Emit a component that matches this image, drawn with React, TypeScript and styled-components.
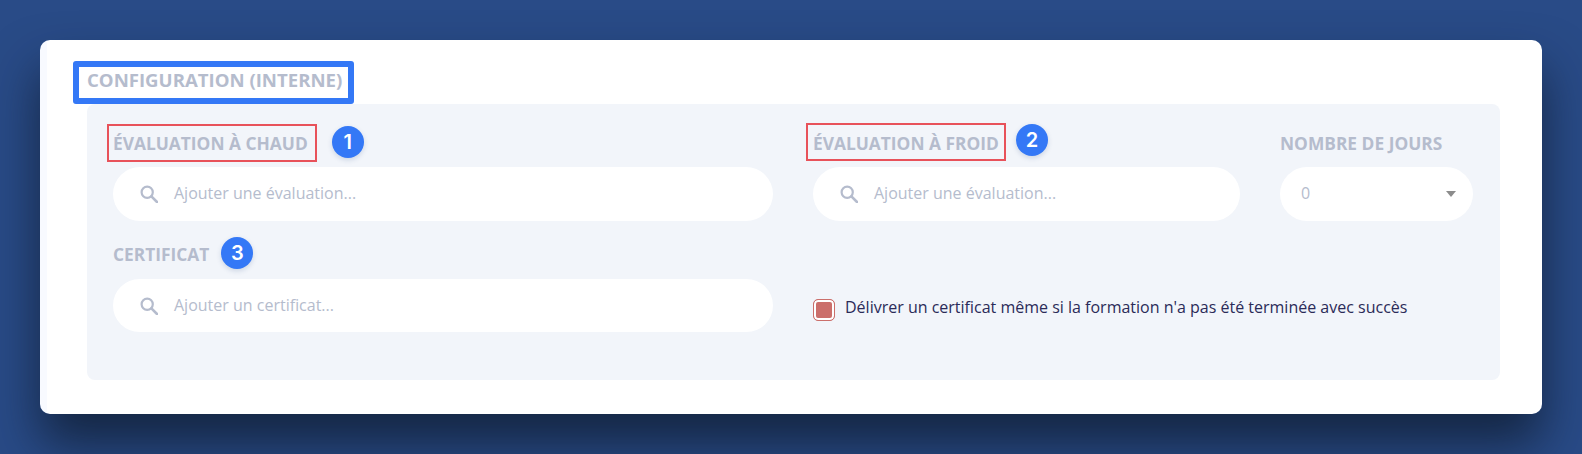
import styled, { createGlobalStyle } from 'styled-components'

const GlobalStyle = createGlobalStyle`
  html, body {
    margin: 0;
    padding: 0;
    background: #294b87;
    font-family: "Open Sans", "Liberation Sans", sans-serif;
  }
`

const Page = styled.div`
  box-sizing: border-box;
  width: 1582px;
  height: 454px;
  padding: 40px;
  overflow: hidden;
  background: #294b87;
`

const Card = styled.section`
  box-sizing: border-box;
  width: 1502px;
  height: 374px;
  padding: 0 42px 34px 47px;
  background: linear-gradient(90deg, #f8faff 0, #f8faff 7px, #fff 7px);
  border-radius: 10px;
  box-shadow: 0 30px 50px rgba(12, 24, 40, 0.72);
`

const TitleRow = styled.div`
  box-sizing: border-box;
  height: 64px;
  padding-top: 16px;
  display: flex;
  align-items: center;
`

const Title = styled.h2`
  position: relative;
  margin: 0;
  font-size: 18.6px;
  line-height: 24px;
  font-weight: 700;
  color: #b5bccd;
  white-space: nowrap;
  &::after {
    content: '';
    position: absolute;
    left: -14px;
    right: -12px;
    top: -7px;
    bottom: -12px;
    border: 6px solid #3478f6;
    border-radius: 3px;
  }
`

const Panel = styled.div`
  box-sizing: border-box;
  height: 276px;
  padding: 20px 27px 0 26px;
  background: #f2f5fa;
  border-radius: 8px;
  display: grid;
  grid-template-columns: 660px 427px 193px;
  grid-template-rows: auto auto;
  column-gap: 40px;
  row-gap: 14px;
  align-content: start;
`

const Field = styled.div`
  display: flex;
  flex-direction: column;
`

const LabelRow = styled.div<{ $below?: number }>`
  height: 38px;
  margin-bottom: ${(p) => p.$below ?? 5}px;
  display: flex;
  align-items: center;
`

const Label = styled.label`
  position: relative;
  font-size: 17.35px;
  line-height: 22px;
  font-weight: 700;
  color: #b5bccd;
  white-space: nowrap;
`

const RedBox = styled.span<{ $top: number; $left: number; $right: number }>`
  position: absolute;
  left: ${(p) => p.$left}px;
  right: ${(p) => p.$right}px;
  top: ${(p) => p.$top}px;
  height: 38px;
  box-sizing: border-box;
  border: 2px solid #e8525a;
`

const Badge = styled.span<{ $gap: number; $shift: number }>`
  position: absolute;
  left: calc(100% + ${(p) => p.$gap}px);
  top: calc(50% - 16px + ${(p) => p.$shift}px);
  width: 32px;
  height: 32px;
  border-radius: 50%;
  background: #3478f6;
  box-shadow: 0 2px 5px rgba(40, 70, 130, 0.18);
  color: #fff;
  font-family: Inter, "Liberation Sans", sans-serif;
  font-size: 20px;
  font-weight: 600;
  line-height: 32px;
  text-align: center;
`

const SearchBox = styled.div<{ $height?: number }>`
  box-sizing: border-box;
  height: ${(p) => p.$height ?? 54}px;
  padding: 0 27px 2px;
  display: flex;
  align-items: center;
  gap: 16px;
  background: #fff;
  border-radius: 27px;
  color: #b5bccd;
  font-size: 16px;
`

const SearchIcon = styled.svg`
  width: 18px;
  height: 18px;
  flex: none;
  position: relative;
  top: 1px;
`

const SelectBox = styled.div`
  box-sizing: border-box;
  height: 54px;
  padding: 0 17px 2px 21px;
  display: flex;
  align-items: center;
  justify-content: space-between;
  background: #fff;
  border-radius: 27px;
  color: #b5bccd;
  font-size: 16px;
`

const Caret = styled.span`
  width: 0;
  height: 0;
  margin-top: 2px;
  border-left: 5px solid transparent;
  border-right: 5px solid transparent;
  border-top: 6px solid #8c8c8c;
`

const CheckRow = styled.div`
  grid-column: span 2;
  align-self: end;
  height: 53px;
  padding-top: 8px;
  box-sizing: border-box;
  display: flex;
  align-items: center;
  gap: 10px;
  font-size: 16px;
  color: #2b2b58;
`

const CheckText = styled.span`
  padding-bottom: 6px;
`

const CheckBox = styled.span`
  box-sizing: border-box;
  width: 22px;
  height: 22px;
  flex: none;
  border: 1px solid #cb6f6b;
  border-radius: 5px;
  background: #cb6f6b;
  box-shadow: inset 0 0 0 2px #fff;
`

function Search({ text, height }: { text: string; height?: number }) {
  return (
    <SearchBox $height={height}>
      <SearchIcon viewBox="0 0 18 18" fill="none" stroke="#b5bccd" aria-hidden="true">
        <circle cx="7.2" cy="7.2" r="5.6" strokeWidth="2.2" />
        <path d="M11.4 11.4 17 17" strokeWidth="2.6" strokeLinecap="round" />
      </SearchIcon>
      {text}
    </SearchBox>
  )
}

export default function App() {
  return (
    <Page>
      <GlobalStyle />
      <Card>
        <TitleRow>
          <Title>CONFIGURATION (INTERNE)</Title>
        </TitleRow>
        <Panel>
          <Field>
            <LabelRow>
              <Label>
                ÉVALUATION À CHAUD
                <RedBox $top={-8} $left={-6} $right={-9} />
                <Badge $gap={24} $shift={-1}>1</Badge>
              </Label>
            </LabelRow>
            <Search text="Ajouter une évaluation..." />
          </Field>
          <Field>
            <LabelRow>
              <Label>
                ÉVALUATION À FROID
                <RedBox $top={-9} $left={-7} $right={-7} />
                <Badge $gap={17} $shift={-3}>2</Badge>
              </Label>
            </LabelRow>
            <Search text="Ajouter une évaluation..." />
          </Field>
          <Field>
            <LabelRow>
              <Label>NOMBRE DE JOURS</Label>
            </LabelRow>
            <SelectBox>
              0
              <Caret />
            </SelectBox>
          </Field>
          <Field>
            <LabelRow $below={6}>
              <Label>
                CERTIFICAT
                <Badge $gap={12} $shift={-1}>3</Badge>
              </Label>
            </LabelRow>
            <Search text="Ajouter un certificat..." height={53} />
          </Field>
          <CheckRow>
            <CheckBox />
            <CheckText>Délivrer un certificat même si la formation n'a pas été terminée avec succès</CheckText>
          </CheckRow>
        </Panel>
      </Card>
    </Page>
  )
}
